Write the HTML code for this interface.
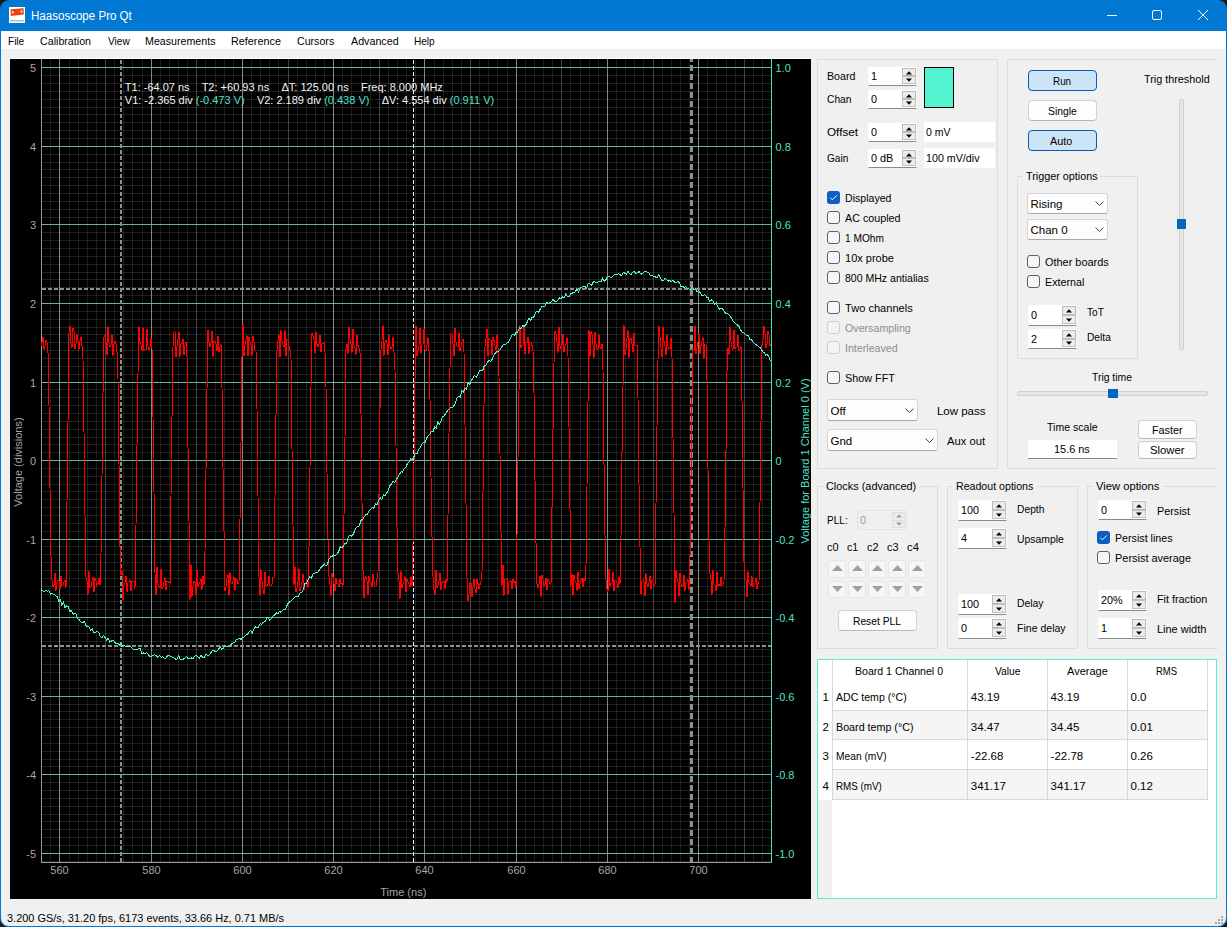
<!DOCTYPE html><html><head><meta charset="utf-8"><style>
*{box-sizing:border-box}
html,body{margin:0;padding:0;width:1227px;height:927px;overflow:hidden;background:#f0f0f0;font-family:"Liberation Sans",sans-serif}
.t{position:absolute;white-space:pre;line-height:20px;height:20px;transform-origin:0 50%}
.gb{position:absolute;border:1px solid #dcdcdc;border-radius:1px}
.sp{position:absolute;background:#fff;border-bottom:1px solid #8a8a8a}
.sb{position:absolute;background:#ececec;border:1px solid #b9b9b9}
.cb{position:absolute;width:13px;height:13px;border:1px solid #606060;border-radius:3px;background:#f6f6f6}
.cbk{position:absolute;width:13px;height:13px;border-radius:3px;background:#0a5fc0}
.combo{position:absolute;background:#fdfdfd;border:1px solid #d4d4d4;border-radius:3px;border-bottom-color:#a8a8a8}
.btn{position:absolute;background:#fdfdfd;border:1px solid #d0d0d0;border-radius:4px;border-bottom-color:#b8b8b8}
.btnb{position:absolute;background:#cce4f7;border:1px solid #0f5ca8;border-radius:4px}
</style></head><body>

<div style="position:absolute;left:0px;top:0px;width:1227px;height:31px;background:#0078d4"></div>
<div style="position:absolute;left:0px;top:31px;width:1227px;height:18px;background:#ffffff"></div>
<svg style="position:absolute;left:0;top:0" width="1227" height="12"><path d="M0 0H9A9 9 0 0 0 0 9Z" fill="#1a1a1a"/><path d="M1227 0H1218A9 9 0 0 1 1227 9Z" fill="#1a1a1a"/></svg>
<div style="position:absolute;left:0px;top:31px;width:1px;height:896px;background:#0078d4"></div>
<div style="position:absolute;left:1226px;top:31px;width:1px;height:896px;background:#0078d4"></div>
<div style="position:absolute;left:0px;top:926px;width:1227px;height:1px;background:#0078d4"></div>
<svg style="position:absolute;left:0;top:915px" width="1227" height="12"><path d="M0 12V3A9 9 0 0 0 9 12Z" fill="#1a1a1a"/><path d="M1227 12V3A9 9 0 0 1 1218 12Z" fill="#1a1a1a"/><path d="M1226.5 3A8.5 8.5 0 0 1 1218 11.5" stroke="#0078d4" fill="none"/><path d="M0.5 3A8.5 8.5 0 0 0 9 11.5" stroke="#0078d4" fill="none"/></svg>
<div style="position:absolute;left:1221px;top:916px;width:2px;height:2px;background:#a8a8a8"></div>
<div style="position:absolute;left:1218px;top:919px;width:2px;height:2px;background:#a8a8a8"></div>
<div style="position:absolute;left:1221px;top:919px;width:2px;height:2px;background:#a8a8a8"></div>
<div style="position:absolute;left:1215px;top:922px;width:2px;height:2px;background:#a8a8a8"></div>
<div style="position:absolute;left:1218px;top:922px;width:2px;height:2px;background:#a8a8a8"></div>
<div style="position:absolute;left:1221px;top:922px;width:2px;height:2px;background:#a8a8a8"></div>
<svg style="position:absolute;left:9px;top:7px" width="16" height="16"><rect width="16" height="16" fill="#fff"/><path d="M1.5 2.2L14.6 1.2L14.8 7.6L1.8 8.9Z" fill="#ec4314"/><ellipse cx="3.7" cy="5.3" rx="0.9" ry="1.2" fill="#e8f4f8"/><ellipse cx="12.5" cy="4.4" rx="0.9" ry="1.2" fill="#e8f4f8"/><rect x="1" y="13.3" width="14" height="1" fill="#9a9a9a"/></svg>
<div class="t" style="left:30.60px;top:6.00px;font-size:12.5px;color:#ffffff;transform:scaleX(0.9241);">Haasoscope Pro Qt</div>
<div style="position:absolute;left:1107px;top:15px;width:10px;height:1px;background:#fff"></div>
<div style="position:absolute;left:1152px;top:10px;width:10px;height:10px;border:1px solid #fff;border-radius:2px"></div>
<svg style="position:absolute;left:1197px;top:9px" width="12" height="12"><path d="M1 1L11 11M11 1L1 11" stroke="#fff" stroke-width="1"/></svg>
<div class="t" style="left:8.20px;top:31.00px;font-size:11.5px;color:#000;transform:scaleX(0.8742);">File</div>
<div class="t" style="left:40.10px;top:31.00px;font-size:11.5px;color:#000;transform:scaleX(0.9277);">Calibration</div>
<div class="t" style="left:107.60px;top:31.00px;font-size:11.5px;color:#000;transform:scaleX(0.8819);">View</div>
<div class="t" style="left:145.10px;top:31.00px;font-size:11.5px;color:#000;transform:scaleX(0.9269);">Measurements</div>
<div class="t" style="left:231.30px;top:31.00px;font-size:11.5px;color:#000;transform:scaleX(0.9405);">Reference</div>
<div class="t" style="left:297.30px;top:31.00px;font-size:11.5px;color:#000;transform:scaleX(0.9241);">Cursors</div>
<div class="t" style="left:350.60px;top:31.00px;font-size:11.5px;color:#000;transform:scaleX(0.9306);">Advanced</div>
<div class="t" style="left:414.30px;top:31.00px;font-size:11.5px;color:#000;transform:scaleX(0.8752);">Help</div>
<svg style="position:absolute;left:10px;top:58px" width="801" height="841" viewBox="10 58 801 841" shape-rendering="crispEdges">
<rect x="10" y="58" width="801" height="1" fill="#ffffff"/>
<rect x="10" y="59" width="801" height="840" fill="#000"/>
<rect x="42" y="861" width="729" height="1" fill="#fff" fill-opacity="0.12"/>
<rect x="42" y="845" width="729" height="1" fill="#fff" fill-opacity="0.12"/>
<rect x="42" y="837" width="729" height="1" fill="#fff" fill-opacity="0.12"/>
<rect x="42" y="829" width="729" height="1" fill="#fff" fill-opacity="0.12"/>
<rect x="42" y="821" width="729" height="1" fill="#fff" fill-opacity="0.12"/>
<rect x="42" y="814" width="729" height="1" fill="#fff" fill-opacity="0.12"/>
<rect x="42" y="806" width="729" height="1" fill="#fff" fill-opacity="0.12"/>
<rect x="42" y="798" width="729" height="1" fill="#fff" fill-opacity="0.12"/>
<rect x="42" y="790" width="729" height="1" fill="#fff" fill-opacity="0.12"/>
<rect x="42" y="782" width="729" height="1" fill="#fff" fill-opacity="0.12"/>
<rect x="42" y="766" width="729" height="1" fill="#fff" fill-opacity="0.12"/>
<rect x="42" y="759" width="729" height="1" fill="#fff" fill-opacity="0.12"/>
<rect x="42" y="751" width="729" height="1" fill="#fff" fill-opacity="0.12"/>
<rect x="42" y="743" width="729" height="1" fill="#fff" fill-opacity="0.12"/>
<rect x="42" y="735" width="729" height="1" fill="#fff" fill-opacity="0.12"/>
<rect x="42" y="727" width="729" height="1" fill="#fff" fill-opacity="0.12"/>
<rect x="42" y="719" width="729" height="1" fill="#fff" fill-opacity="0.12"/>
<rect x="42" y="711" width="729" height="1" fill="#fff" fill-opacity="0.12"/>
<rect x="42" y="704" width="729" height="1" fill="#fff" fill-opacity="0.12"/>
<rect x="42" y="688" width="729" height="1" fill="#fff" fill-opacity="0.12"/>
<rect x="42" y="680" width="729" height="1" fill="#fff" fill-opacity="0.12"/>
<rect x="42" y="672" width="729" height="1" fill="#fff" fill-opacity="0.12"/>
<rect x="42" y="664" width="729" height="1" fill="#fff" fill-opacity="0.12"/>
<rect x="42" y="656" width="729" height="1" fill="#fff" fill-opacity="0.12"/>
<rect x="42" y="649" width="729" height="1" fill="#fff" fill-opacity="0.12"/>
<rect x="42" y="641" width="729" height="1" fill="#fff" fill-opacity="0.12"/>
<rect x="42" y="633" width="729" height="1" fill="#fff" fill-opacity="0.12"/>
<rect x="42" y="625" width="729" height="1" fill="#fff" fill-opacity="0.12"/>
<rect x="42" y="609" width="729" height="1" fill="#fff" fill-opacity="0.12"/>
<rect x="42" y="601" width="729" height="1" fill="#fff" fill-opacity="0.12"/>
<rect x="42" y="594" width="729" height="1" fill="#fff" fill-opacity="0.12"/>
<rect x="42" y="586" width="729" height="1" fill="#fff" fill-opacity="0.12"/>
<rect x="42" y="578" width="729" height="1" fill="#fff" fill-opacity="0.12"/>
<rect x="42" y="570" width="729" height="1" fill="#fff" fill-opacity="0.12"/>
<rect x="42" y="562" width="729" height="1" fill="#fff" fill-opacity="0.12"/>
<rect x="42" y="554" width="729" height="1" fill="#fff" fill-opacity="0.12"/>
<rect x="42" y="546" width="729" height="1" fill="#fff" fill-opacity="0.12"/>
<rect x="42" y="531" width="729" height="1" fill="#fff" fill-opacity="0.12"/>
<rect x="42" y="523" width="729" height="1" fill="#fff" fill-opacity="0.12"/>
<rect x="42" y="515" width="729" height="1" fill="#fff" fill-opacity="0.12"/>
<rect x="42" y="507" width="729" height="1" fill="#fff" fill-opacity="0.12"/>
<rect x="42" y="499" width="729" height="1" fill="#fff" fill-opacity="0.12"/>
<rect x="42" y="491" width="729" height="1" fill="#fff" fill-opacity="0.12"/>
<rect x="42" y="484" width="729" height="1" fill="#fff" fill-opacity="0.12"/>
<rect x="42" y="476" width="729" height="1" fill="#fff" fill-opacity="0.12"/>
<rect x="42" y="468" width="729" height="1" fill="#fff" fill-opacity="0.12"/>
<rect x="42" y="452" width="729" height="1" fill="#fff" fill-opacity="0.12"/>
<rect x="42" y="444" width="729" height="1" fill="#fff" fill-opacity="0.12"/>
<rect x="42" y="437" width="729" height="1" fill="#fff" fill-opacity="0.12"/>
<rect x="42" y="429" width="729" height="1" fill="#fff" fill-opacity="0.12"/>
<rect x="42" y="421" width="729" height="1" fill="#fff" fill-opacity="0.12"/>
<rect x="42" y="413" width="729" height="1" fill="#fff" fill-opacity="0.12"/>
<rect x="42" y="405" width="729" height="1" fill="#fff" fill-opacity="0.12"/>
<rect x="42" y="397" width="729" height="1" fill="#fff" fill-opacity="0.12"/>
<rect x="42" y="389" width="729" height="1" fill="#fff" fill-opacity="0.12"/>
<rect x="42" y="374" width="729" height="1" fill="#fff" fill-opacity="0.12"/>
<rect x="42" y="366" width="729" height="1" fill="#fff" fill-opacity="0.12"/>
<rect x="42" y="358" width="729" height="1" fill="#fff" fill-opacity="0.12"/>
<rect x="42" y="350" width="729" height="1" fill="#fff" fill-opacity="0.12"/>
<rect x="42" y="342" width="729" height="1" fill="#fff" fill-opacity="0.12"/>
<rect x="42" y="334" width="729" height="1" fill="#fff" fill-opacity="0.12"/>
<rect x="42" y="327" width="729" height="1" fill="#fff" fill-opacity="0.12"/>
<rect x="42" y="319" width="729" height="1" fill="#fff" fill-opacity="0.12"/>
<rect x="42" y="311" width="729" height="1" fill="#fff" fill-opacity="0.12"/>
<rect x="42" y="295" width="729" height="1" fill="#fff" fill-opacity="0.12"/>
<rect x="42" y="287" width="729" height="1" fill="#fff" fill-opacity="0.12"/>
<rect x="42" y="279" width="729" height="1" fill="#fff" fill-opacity="0.12"/>
<rect x="42" y="272" width="729" height="1" fill="#fff" fill-opacity="0.12"/>
<rect x="42" y="264" width="729" height="1" fill="#fff" fill-opacity="0.12"/>
<rect x="42" y="256" width="729" height="1" fill="#fff" fill-opacity="0.12"/>
<rect x="42" y="248" width="729" height="1" fill="#fff" fill-opacity="0.12"/>
<rect x="42" y="240" width="729" height="1" fill="#fff" fill-opacity="0.12"/>
<rect x="42" y="232" width="729" height="1" fill="#fff" fill-opacity="0.12"/>
<rect x="42" y="217" width="729" height="1" fill="#fff" fill-opacity="0.12"/>
<rect x="42" y="209" width="729" height="1" fill="#fff" fill-opacity="0.12"/>
<rect x="42" y="201" width="729" height="1" fill="#fff" fill-opacity="0.12"/>
<rect x="42" y="193" width="729" height="1" fill="#fff" fill-opacity="0.12"/>
<rect x="42" y="185" width="729" height="1" fill="#fff" fill-opacity="0.12"/>
<rect x="42" y="177" width="729" height="1" fill="#fff" fill-opacity="0.12"/>
<rect x="42" y="169" width="729" height="1" fill="#fff" fill-opacity="0.12"/>
<rect x="42" y="162" width="729" height="1" fill="#fff" fill-opacity="0.12"/>
<rect x="42" y="154" width="729" height="1" fill="#fff" fill-opacity="0.12"/>
<rect x="42" y="138" width="729" height="1" fill="#fff" fill-opacity="0.12"/>
<rect x="42" y="130" width="729" height="1" fill="#fff" fill-opacity="0.12"/>
<rect x="42" y="122" width="729" height="1" fill="#fff" fill-opacity="0.12"/>
<rect x="42" y="114" width="729" height="1" fill="#fff" fill-opacity="0.12"/>
<rect x="42" y="107" width="729" height="1" fill="#fff" fill-opacity="0.12"/>
<rect x="42" y="99" width="729" height="1" fill="#fff" fill-opacity="0.12"/>
<rect x="42" y="91" width="729" height="1" fill="#fff" fill-opacity="0.12"/>
<rect x="42" y="83" width="729" height="1" fill="#fff" fill-opacity="0.12"/>
<rect x="42" y="75" width="729" height="1" fill="#fff" fill-opacity="0.12"/>
<rect x="50" y="59" width="1" height="803" fill="#fff" fill-opacity="0.105"/>
<rect x="59" y="59" width="1" height="803" fill="#fff" fill-opacity="0.52"/>
<rect x="69" y="59" width="1" height="803" fill="#fff" fill-opacity="0.105"/>
<rect x="78" y="59" width="1" height="803" fill="#fff" fill-opacity="0.105"/>
<rect x="87" y="59" width="1" height="803" fill="#fff" fill-opacity="0.105"/>
<rect x="96" y="59" width="1" height="803" fill="#fff" fill-opacity="0.105"/>
<rect x="105" y="59" width="1" height="803" fill="#fff" fill-opacity="0.25"/>
<rect x="114" y="59" width="1" height="803" fill="#fff" fill-opacity="0.105"/>
<rect x="123" y="59" width="1" height="803" fill="#fff" fill-opacity="0.105"/>
<rect x="132" y="59" width="1" height="803" fill="#fff" fill-opacity="0.105"/>
<rect x="142" y="59" width="1" height="803" fill="#fff" fill-opacity="0.105"/>
<rect x="151" y="59" width="1" height="803" fill="#fff" fill-opacity="0.52"/>
<rect x="160" y="59" width="1" height="803" fill="#fff" fill-opacity="0.105"/>
<rect x="169" y="59" width="1" height="803" fill="#fff" fill-opacity="0.105"/>
<rect x="178" y="59" width="1" height="803" fill="#fff" fill-opacity="0.105"/>
<rect x="187" y="59" width="1" height="803" fill="#fff" fill-opacity="0.105"/>
<rect x="196" y="59" width="1" height="803" fill="#fff" fill-opacity="0.25"/>
<rect x="205" y="59" width="1" height="803" fill="#fff" fill-opacity="0.105"/>
<rect x="215" y="59" width="1" height="803" fill="#fff" fill-opacity="0.105"/>
<rect x="224" y="59" width="1" height="803" fill="#fff" fill-opacity="0.105"/>
<rect x="233" y="59" width="1" height="803" fill="#fff" fill-opacity="0.105"/>
<rect x="242" y="59" width="1" height="803" fill="#fff" fill-opacity="0.52"/>
<rect x="251" y="59" width="1" height="803" fill="#fff" fill-opacity="0.105"/>
<rect x="260" y="59" width="1" height="803" fill="#fff" fill-opacity="0.105"/>
<rect x="269" y="59" width="1" height="803" fill="#fff" fill-opacity="0.105"/>
<rect x="278" y="59" width="1" height="803" fill="#fff" fill-opacity="0.105"/>
<rect x="288" y="59" width="1" height="803" fill="#fff" fill-opacity="0.25"/>
<rect x="297" y="59" width="1" height="803" fill="#fff" fill-opacity="0.105"/>
<rect x="306" y="59" width="1" height="803" fill="#fff" fill-opacity="0.105"/>
<rect x="315" y="59" width="1" height="803" fill="#fff" fill-opacity="0.105"/>
<rect x="324" y="59" width="1" height="803" fill="#fff" fill-opacity="0.105"/>
<rect x="333" y="59" width="1" height="803" fill="#fff" fill-opacity="0.52"/>
<rect x="342" y="59" width="1" height="803" fill="#fff" fill-opacity="0.105"/>
<rect x="351" y="59" width="1" height="803" fill="#fff" fill-opacity="0.105"/>
<rect x="361" y="59" width="1" height="803" fill="#fff" fill-opacity="0.105"/>
<rect x="370" y="59" width="1" height="803" fill="#fff" fill-opacity="0.105"/>
<rect x="379" y="59" width="1" height="803" fill="#fff" fill-opacity="0.25"/>
<rect x="388" y="59" width="1" height="803" fill="#fff" fill-opacity="0.105"/>
<rect x="397" y="59" width="1" height="803" fill="#fff" fill-opacity="0.105"/>
<rect x="406" y="59" width="1" height="803" fill="#fff" fill-opacity="0.105"/>
<rect x="415" y="59" width="1" height="803" fill="#fff" fill-opacity="0.105"/>
<rect x="424" y="59" width="1" height="803" fill="#fff" fill-opacity="0.52"/>
<rect x="434" y="59" width="1" height="803" fill="#fff" fill-opacity="0.105"/>
<rect x="443" y="59" width="1" height="803" fill="#fff" fill-opacity="0.105"/>
<rect x="452" y="59" width="1" height="803" fill="#fff" fill-opacity="0.105"/>
<rect x="461" y="59" width="1" height="803" fill="#fff" fill-opacity="0.105"/>
<rect x="470" y="59" width="1" height="803" fill="#fff" fill-opacity="0.25"/>
<rect x="479" y="59" width="1" height="803" fill="#fff" fill-opacity="0.105"/>
<rect x="488" y="59" width="1" height="803" fill="#fff" fill-opacity="0.105"/>
<rect x="497" y="59" width="1" height="803" fill="#fff" fill-opacity="0.105"/>
<rect x="507" y="59" width="1" height="803" fill="#fff" fill-opacity="0.105"/>
<rect x="516" y="59" width="1" height="803" fill="#fff" fill-opacity="0.52"/>
<rect x="525" y="59" width="1" height="803" fill="#fff" fill-opacity="0.105"/>
<rect x="534" y="59" width="1" height="803" fill="#fff" fill-opacity="0.105"/>
<rect x="543" y="59" width="1" height="803" fill="#fff" fill-opacity="0.105"/>
<rect x="552" y="59" width="1" height="803" fill="#fff" fill-opacity="0.105"/>
<rect x="561" y="59" width="1" height="803" fill="#fff" fill-opacity="0.25"/>
<rect x="570" y="59" width="1" height="803" fill="#fff" fill-opacity="0.105"/>
<rect x="580" y="59" width="1" height="803" fill="#fff" fill-opacity="0.105"/>
<rect x="589" y="59" width="1" height="803" fill="#fff" fill-opacity="0.105"/>
<rect x="598" y="59" width="1" height="803" fill="#fff" fill-opacity="0.105"/>
<rect x="607" y="59" width="1" height="803" fill="#fff" fill-opacity="0.52"/>
<rect x="616" y="59" width="1" height="803" fill="#fff" fill-opacity="0.105"/>
<rect x="625" y="59" width="1" height="803" fill="#fff" fill-opacity="0.105"/>
<rect x="634" y="59" width="1" height="803" fill="#fff" fill-opacity="0.105"/>
<rect x="643" y="59" width="1" height="803" fill="#fff" fill-opacity="0.105"/>
<rect x="653" y="59" width="1" height="803" fill="#fff" fill-opacity="0.25"/>
<rect x="662" y="59" width="1" height="803" fill="#fff" fill-opacity="0.105"/>
<rect x="671" y="59" width="1" height="803" fill="#fff" fill-opacity="0.105"/>
<rect x="680" y="59" width="1" height="803" fill="#fff" fill-opacity="0.105"/>
<rect x="689" y="59" width="1" height="803" fill="#fff" fill-opacity="0.105"/>
<rect x="698" y="59" width="1" height="803" fill="#fff" fill-opacity="0.52"/>
<rect x="707" y="59" width="1" height="803" fill="#fff" fill-opacity="0.105"/>
<rect x="716" y="59" width="1" height="803" fill="#fff" fill-opacity="0.105"/>
<rect x="726" y="59" width="1" height="803" fill="#fff" fill-opacity="0.105"/>
<rect x="735" y="59" width="1" height="803" fill="#fff" fill-opacity="0.105"/>
<rect x="744" y="59" width="1" height="803" fill="#fff" fill-opacity="0.25"/>
<rect x="753" y="59" width="1" height="803" fill="#fff" fill-opacity="0.105"/>
<rect x="762" y="59" width="1" height="803" fill="#fff" fill-opacity="0.105"/>
<rect x="42" y="853" width="729" height="1" fill="#6ab4a2"/>
<rect x="42" y="774" width="729" height="1" fill="#6ab4a2"/>
<rect x="42" y="696" width="729" height="1" fill="#6ab4a2"/>
<rect x="42" y="617" width="729" height="1" fill="#6ab4a2"/>
<rect x="42" y="539" width="729" height="1" fill="#6ab4a2"/>
<rect x="42" y="460" width="729" height="1" fill="#6ab4a2"/>
<rect x="42" y="382" width="729" height="1" fill="#6ab4a2"/>
<rect x="42" y="303" width="729" height="1" fill="#6ab4a2"/>
<rect x="42" y="224" width="729" height="1" fill="#6ab4a2"/>
<rect x="42" y="146" width="729" height="1" fill="#6ab4a2"/>
<rect x="42" y="67" width="729" height="1" fill="#6ab4a2"/>
<rect x="41" y="59" width="1" height="804" fill="#9a9a9a"/>
<rect x="41" y="862" width="731" height="1" fill="#9a9a9a"/>
<rect x="771" y="59" width="1" height="804" fill="#50e0c4"/>
<line x1="121" y1="60" x2="121" y2="862" stroke="#8e8e8e" stroke-width="2" stroke-dasharray="4 2"/>
<line x1="413.5" y1="60" x2="413.5" y2="862" stroke="#f4f4f4" stroke-width="1" stroke-dasharray="4 2"/>
<line x1="691.5" y1="59" x2="691.5" y2="862" stroke="#8e8e8e" stroke-width="3" stroke-dasharray="6 3" stroke-dashoffset="3"/>
<line x1="42" y1="289" x2="771" y2="289" stroke="#8e8e8e" stroke-width="2" stroke-dasharray="4 2"/>
<line x1="42" y1="646" x2="771" y2="646" stroke="#8e8e8e" stroke-width="2" stroke-dasharray="4 2"/>
<polyline fill="none" stroke="#ff0000" stroke-width="1" points="41.0,346.5 42.0,341.7 43.0,337.0 44.0,349.4 45.0,346.3 46.0,340.6 47.0,341.7 48.0,352.7 49.0,404.7 50.0,487.7 51.0,556.7 52.0,580.1 53.0,587.3 54.0,585.1 55.0,573.2 56.0,590.6 57.0,582.1 58.0,579.7 59.0,581.1 60.0,589.3 61.0,575.6 62.0,586.2 63.0,585.2 64.0,581.6 65.0,579.8 66.0,588.3 67.0,501.7 68.0,422.0 69.0,333.5 70.0,326.1 71.0,342.9 72.0,347.6 73.0,327.8 74.0,331.3 75.0,349.4 76.0,344.1 77.0,334.5 78.0,340.8 79.0,349.6 80.0,341.4 81.0,336.8 82.0,345.5 83.0,359.4 84.0,431.8 85.0,515.2 86.0,577.2 87.0,581.0 88.0,594.7 89.0,571.4 90.0,587.4 91.0,586.3 92.0,580.8 93.0,577.1 94.0,592.3 95.0,577.9 96.0,581.3 97.0,585.4 98.0,583.6 99.0,577.8 100.0,585.4 101.0,553.9 102.0,475.9 103.0,392.9 104.0,337.0 105.0,335.0 106.0,342.2 107.0,355.4 108.0,326.3 109.0,342.6 110.0,346.9 111.0,344.7 112.0,334.5 113.0,355.7 114.0,344.5 115.0,340.9 116.0,344.1 117.0,351.6 118.0,379.3 119.0,463.8 120.0,546.8 121.0,574.8 122.0,570.4 123.0,599.9 124.0,584.8 125.0,583.4 126.0,575.6 127.0,591.9 128.0,583.0 129.0,582.3 130.0,579.9 131.0,591.0 132.0,580.9 133.0,582.2 134.0,581.1 135.0,588.7 136.0,525.4 137.0,445.5 138.0,373.8 139.0,326.4 140.0,342.6 141.0,344.8 142.0,350.2 143.0,327.8 144.0,350.0 145.0,349.2 146.0,350.1 147.0,328.9 148.0,345.6 149.0,349.8 150.0,347.5 151.0,338.3 152.0,347.7 153.0,416.8 154.0,492.2 155.0,573.2 156.0,595.4 157.0,566.7 158.0,583.1 159.0,586.5 160.0,588.2 161.0,569.2 162.0,588.5 163.0,586.8 164.0,581.9 165.0,577.6 166.0,590.1 167.0,581.3 168.0,581.4 169.0,582.3 170.0,585.0 171.0,496.6 172.0,417.2 173.0,346.7 174.0,331.7 175.0,331.9 176.0,357.3 177.0,346.0 178.0,338.9 179.0,331.7 180.0,356.6 181.0,343.8 182.0,344.1 183.0,339.2 184.0,355.0 185.0,344.9 186.0,342.2 187.0,356.5 188.0,447.1 189.0,520.5 190.0,600.0 191.0,564.1 192.0,596.6 193.0,586.2 194.0,581.4 195.0,582.5 196.0,595.2 197.0,569.7 198.0,586.6 199.0,583.9 200.0,582.4 201.0,578.9 202.0,589.6 203.0,575.7 204.0,584.6 205.0,551.3 206.0,470.6 207.0,389.1 208.0,329.9 209.0,342.5 210.0,346.7 211.0,342.9 212.0,331.1 213.0,356.5 214.0,341.6 215.0,341.5 216.0,343.7 217.0,350.8 218.0,335.9 219.0,351.9 220.0,347.4 221.0,344.2 222.0,387.6 223.0,467.9 224.0,531.0 225.0,591.0 226.0,586.7 227.0,578.3 228.0,574.3 229.0,595.7 230.0,572.5 231.0,582.9 232.0,584.0 233.0,581.4 234.0,577.2 235.0,590.2 236.0,577.8 237.0,580.5 238.0,584.1 239.0,582.5 240.0,520.2 241.0,443.2 242.0,356.9 243.0,324.8 244.0,356.3 245.0,345.3 246.0,340.1 247.0,335.5 248.0,356.3 249.0,337.4 250.0,342.3 251.0,344.5 252.0,355.9 253.0,336.0 254.0,342.4 255.0,350.3 256.0,350.9 257.0,409.2 258.0,496.1 259.0,577.1 260.0,595.5 261.0,569.4 262.0,580.7 263.0,588.9 264.0,594.2 265.0,572.1 266.0,585.9 267.0,586.1 268.0,584.4 269.0,576.1 270.0,585.2 271.0,585.8 272.0,584.0 273.0,577.2 274.0,577.7 275.0,497.4 276.0,415.1 277.0,350.8 278.0,339.7 279.0,334.3 280.0,357.4 281.0,330.5 282.0,341.1 283.0,344.7 284.0,347.2 285.0,330.3 286.0,356.0 287.0,339.7 288.0,338.8 289.0,346.2 290.0,349.5 291.0,357.9 292.0,448.7 293.0,524.7 294.0,584.6 295.0,567.1 296.0,591.9 297.0,587.7 298.0,580.8 299.0,568.4 300.0,591.4 301.0,587.1 302.0,581.7 303.0,574.0 304.0,589.7 305.0,584.5 306.0,583.5 307.0,579.3 308.0,587.6 309.0,547.6 310.0,468.1 311.0,386.4 312.0,333.5 313.0,336.3 314.0,340.0 315.0,353.1 316.0,332.3 317.0,344.4 318.0,346.7 319.0,343.8 320.0,334.7 321.0,351.8 322.0,343.9 323.0,343.0 324.0,343.0 325.0,352.2 326.0,387.0 327.0,472.4 328.0,539.1 329.0,576.6 330.0,585.0 331.0,595.7 332.0,573.2 333.0,577.1 334.0,583.7 335.0,591.2 336.0,578.2 337.0,583.7 338.0,583.7 339.0,586.8 340.0,579.4 341.0,583.6 342.0,583.5 343.0,587.2 344.0,515.3 345.0,437.8 346.0,349.0 347.0,343.6 348.0,353.9 349.0,326.9 350.0,339.0 351.0,344.0 352.0,353.1 353.0,328.6 354.0,345.3 355.0,347.8 356.0,354.9 357.0,334.7 358.0,345.6 359.0,347.6 360.0,352.4 361.0,413.5 362.0,500.8 363.0,570.0 364.0,598.2 365.0,578.6 366.0,576.5 367.0,580.5 368.0,595.3 369.0,576.0 370.0,581.9 371.0,582.4 372.0,586.9 373.0,573.8 374.0,582.0 375.0,586.2 376.0,586.0 377.0,578.1 378.0,572.6 379.0,493.0 380.0,409.6 381.0,350.4 382.0,340.7 383.0,325.2 384.0,355.7 385.0,342.3 386.0,339.9 387.0,344.1 388.0,355.3 389.0,335.2 390.0,345.7 391.0,349.1 392.0,346.9 393.0,337.5 394.0,352.8 395.0,369.8 396.0,445.8 397.0,527.3 398.0,573.0 399.0,580.8 400.0,598.6 401.0,571.3 402.0,587.7 403.0,584.2 404.0,580.9 405.0,576.6 406.0,591.9 407.0,579.3 408.0,582.1 409.0,584.3 410.0,587.2 411.0,577.3 412.0,586.0 413.0,544.4 414.0,463.7 415.0,380.9 416.0,325.6 417.0,355.8 418.0,350.6 419.0,345.6 420.0,327.6 421.0,353.0 422.0,345.1 423.0,344.8 424.0,329.2 425.0,349.8 426.0,350.6 427.0,345.4 428.0,337.4 429.0,350.7 430.0,399.0 431.0,477.2 432.0,536.7 433.0,576.5 434.0,590.4 435.0,594.6 436.0,569.7 437.0,587.3 438.0,586.5 439.0,581.0 440.0,573.2 441.0,590.3 442.0,582.5 443.0,581.0 444.0,581.1 445.0,589.3 446.0,579.0 447.0,582.4 448.0,516.1 449.0,433.2 450.0,368.0 451.0,333.7 452.0,335.0 453.0,343.7 454.0,356.2 455.0,328.1 456.0,341.8 457.0,345.8 458.0,347.1 459.0,333.1 460.0,350.9 461.0,346.8 462.0,342.0 463.0,338.9 464.0,352.3 465.0,424.5 466.0,503.1 467.0,577.7 468.0,601.1 469.0,594.8 470.0,582.0 471.0,583.4 472.0,597.1 473.0,587.2 474.0,578.6 475.0,588.9 476.0,592.9 477.0,579.0 478.0,583.5 479.0,589.0 480.0,584.6 481.0,581.1 482.0,571.6 483.0,492.2 484.0,405.5 485.0,347.5 486.0,338.3 487.0,328.9 488.0,356.3 489.0,338.5 490.0,340.1 491.0,340.2 492.0,355.4 493.0,336.6 494.0,340.5 495.0,346.1 496.0,350.2 497.0,335.3 498.0,347.6 499.0,375.9 500.0,454.1 501.0,530.9 502.0,585.8 503.0,565.0 504.0,595.5 505.0,579.7 506.0,578.9 507.0,578.5 508.0,594.2 509.0,582.1 510.0,580.7 511.0,581.5 512.0,589.4 513.0,579.2 514.0,582.8 515.0,581.2 516.0,587.7 517.0,535.7 518.0,459.4 519.0,391.4 520.0,325.4 521.0,347.9 522.0,344.8 523.0,345.6 524.0,326.9 525.0,354.3 526.0,342.9 527.0,342.7 528.0,336.7 529.0,353.5 530.0,342.5 531.0,342.0 532.0,345.4 533.0,351.1 534.0,393.3 535.0,479.6 536.0,542.8 537.0,583.9 538.0,587.5 539.0,584.0 540.0,575.8 541.0,596.7 542.0,574.6 543.0,579.9 544.0,585.5 545.0,584.3 546.0,577.7 547.0,589.7 548.0,578.6 549.0,581.3 550.0,583.6 551.0,584.7 552.0,508.5 553.0,430.5 554.0,362.7 555.0,331.2 556.0,334.3 557.0,342.5 558.0,352.6 559.0,327.0 560.0,346.0 561.0,348.7 562.0,345.5 563.0,333.9 564.0,352.1 565.0,345.9 566.0,344.3 567.0,337.4 568.0,356.4 569.0,426.5 570.0,508.5 571.0,585.6 572.0,574.1 573.0,595.8 574.0,575.0 575.0,581.3 576.0,582.6 577.0,590.7 578.0,572.0 579.0,588.9 580.0,584.3 581.0,580.5 582.0,578.2 583.0,586.7 584.0,577.8 585.0,580.8 586.0,566.1 587.0,486.1 588.0,402.7 589.0,330.4 590.0,356.7 591.0,331.6 592.0,333.9 593.0,344.6 594.0,357.8 595.0,331.7 596.0,344.1 597.0,348.7 598.0,349.3 599.0,335.0 600.0,346.9 601.0,349.0 602.0,344.1 603.0,369.7 604.0,464.7 605.0,535.2 606.0,579.9 607.0,588.8 608.0,592.0 609.0,569.1 610.0,586.3 611.0,583.2 612.0,583.0 613.0,572.2 614.0,591.4 615.0,579.9 616.0,581.3 617.0,583.0 618.0,588.3 619.0,576.8 620.0,584.0 621.0,536.8 622.0,453.4 623.0,386.5 624.0,325.1 625.0,354.8 626.0,350.2 627.0,338.5 628.0,330.5 629.0,357.5 630.0,339.5 631.0,337.7 632.0,343.6 633.0,352.4 634.0,332.8 635.0,345.0 636.0,346.3 637.0,344.8 638.0,397.8 639.0,484.3 640.0,547.3 641.0,594.0 642.0,581.2 643.0,580.3 644.0,581.7 645.0,596.0 646.0,573.5 647.0,583.7 648.0,587.0 649.0,581.7 650.0,576.3 651.0,589.7 652.0,580.6 653.0,581.2 654.0,583.8 655.0,586.4 656.0,503.0 657.0,426.6 658.0,359.9 659.0,325.6 660.0,337.2 661.0,348.4 662.0,357.1 663.0,327.1 664.0,341.5 665.0,345.9 666.0,355.1 667.0,334.6 668.0,346.1 669.0,349.1 670.0,348.7 671.0,338.2 672.0,356.8 673.0,437.5 674.0,512.7 675.0,602.9 676.0,570.4 677.0,579.3 678.0,581.4 679.0,596.3 680.0,573.3 681.0,582.9 682.0,586.8 683.0,585.7 684.0,574.8 685.0,590.5 686.0,583.2 687.0,582.0 688.0,579.5 689.0,590.0 690.0,556.9 691.0,478.3 692.0,398.6 693.0,348.9 694.0,350.3 695.0,325.8 696.0,353.7 697.0,348.4 698.0,341.7 699.0,334.1 700.0,353.5 701.0,345.6 702.0,340.7 703.0,337.5 704.0,358.5 705.0,344.3 706.0,344.7 707.0,382.8 708.0,467.8 709.0,538.6 710.0,574.3 711.0,580.0 712.0,594.5 713.0,570.4 714.0,584.1 715.0,584.7 716.0,591.3 717.0,572.0 718.0,585.9 719.0,584.6 720.0,585.7 721.0,576.9 722.0,585.8 723.0,585.1 724.0,581.5 725.0,528.5 726.0,450.5 727.0,371.6 728.0,348.1 729.0,354.9 730.0,326.6 731.0,341.6 732.0,347.7 733.0,349.6 734.0,329.8 735.0,348.7 736.0,347.2 737.0,347.3 738.0,335.0 739.0,350.3 740.0,349.0 741.0,346.2 742.0,400.5 743.0,488.2 744.0,561.6 745.0,579.1 746.0,579.9 747.0,597.3 748.0,571.5 749.0,583.4 750.0,584.2 751.0,586.3 752.0,576.4 753.0,587.0 754.0,585.3 755.0,583.5 756.0,578.2 757.0,588.7 758.0,583.5 759.0,582.0 760.0,502.8 761.0,421.8 762.0,344.9 763.0,340.0 764.0,325.9 765.0,332.7 766.0,347.8 767.0,344.5 768.0,330.7 769.0,334.8 770.0,345.6 771.0,344.0"/>
<polyline fill="none" stroke="#4ff5d2" stroke-width="1" points="41.0,588.2 42.6,590.6 44.2,591.8 45.8,590.5 47.4,591.2 49.0,590.9 50.6,594.3 52.2,593.6 53.8,594.6 55.4,595.3 57.0,596.5 58.6,600.9 60.2,599.8 61.8,604.9 63.4,602.5 65.0,607.4 66.6,605.7 68.2,606.7 69.8,611.3 71.4,610.7 73.0,614.3 74.6,613.4 76.2,614.3 77.8,618.9 79.4,620.0 81.0,622.1 82.6,622.9 84.2,621.5 85.8,625.2 87.4,626.8 89.0,627.0 90.6,630.3 92.2,628.6 93.8,632.9 95.4,633.0 97.0,631.1 98.6,632.2 100.2,636.1 101.8,637.8 103.4,635.5 105.0,637.4 106.6,640.1 108.2,638.4 109.8,642.2 111.4,641.2 113.0,640.0 114.6,642.0 116.2,643.5 117.8,643.5 119.4,645.1 121.0,643.3 122.6,646.7 124.2,645.1 125.8,646.6 127.4,646.8 129.0,646.2 130.6,646.4 132.2,648.5 133.8,649.8 135.4,649.7 137.0,649.4 138.6,648.9 140.2,648.6 141.8,653.3 143.4,652.8 145.0,654.1 146.6,652.6 148.2,654.4 149.8,656.5 151.4,656.3 153.0,655.7 154.6,654.7 156.2,655.4 157.8,657.6 159.4,655.5 161.0,657.1 162.6,656.9 164.2,658.4 165.8,658.2 167.4,656.1 169.0,655.0 170.6,656.3 172.2,657.1 173.8,658.0 175.4,659.0 177.0,659.4 178.6,655.7 180.2,659.1 181.8,659.0 183.4,659.2 185.0,657.9 186.6,656.5 188.2,659.0 189.8,658.7 191.4,658.0 193.0,658.9 194.6,656.3 196.2,655.1 197.8,657.0 199.4,657.9 201.0,655.1 202.6,657.2 204.2,657.7 205.8,654.3 207.4,655.3 209.0,654.9 210.6,653.0 212.2,651.0 213.8,650.3 215.4,651.8 217.0,651.2 218.6,649.1 220.2,646.8 221.8,649.3 223.4,648.5 225.0,645.5 226.6,646.3 228.2,647.0 229.8,646.2 231.4,643.8 233.0,642.8 234.6,642.5 236.2,639.9 237.8,639.1 239.4,638.2 241.0,639.6 242.6,637.1 244.2,637.0 245.8,635.2 247.4,634.6 249.0,631.8 250.6,630.2 252.2,633.1 253.8,629.2 255.4,626.8 257.0,627.9 258.6,627.4 260.2,623.5 261.8,624.3 263.4,622.1 265.0,621.8 266.6,618.5 268.2,617.4 269.8,620.5 271.4,618.9 273.0,616.1 274.6,615.3 276.2,612.8 277.8,613.9 279.4,611.2 281.0,612.3 282.6,610.4 284.2,609.4 285.8,608.9 287.4,604.5 289.0,602.2 290.6,601.5 292.2,600.1 293.8,598.2 295.4,596.4 297.0,596.9 298.6,596.3 300.2,592.2 301.8,592.0 303.4,589.4 305.0,583.2 306.6,583.1 308.2,579.9 309.8,576.6 311.4,578.4 313.0,573.6 314.6,573.4 316.2,572.3 317.8,572.4 319.4,569.8 321.0,567.3 322.6,566.3 324.2,563.6 325.8,565.8 327.4,564.4 329.0,559.4 330.6,556.9 332.2,556.2 333.8,554.9 335.4,555.6 337.0,553.9 338.6,551.8 340.2,546.6 341.8,548.0 343.4,545.8 345.0,543.6 346.6,543.2 348.2,537.1 349.8,535.5 351.4,536.1 353.0,534.7 354.6,531.4 356.2,527.6 357.8,526.8 359.4,525.4 361.0,520.4 362.6,519.3 364.2,517.0 365.8,514.5 367.4,514.3 369.0,511.2 370.6,509.7 372.2,507.6 373.8,508.2 375.4,503.6 377.0,504.8 378.6,500.6 380.2,497.9 381.8,499.8 383.4,494.5 385.0,495.5 386.6,493.0 388.2,490.9 389.8,485.4 391.4,484.6 393.0,480.9 394.6,482.4 396.2,480.0 397.8,477.1 399.4,474.3 401.0,471.9 402.6,472.2 404.2,468.8 405.8,467.5 407.4,463.5 409.0,461.9 410.6,459.1 412.2,459.9 413.8,457.1 415.4,453.2 417.0,454.1 418.6,449.3 420.2,447.7 421.8,444.3 423.4,442.5 425.0,442.8 426.6,438.3 428.2,435.3 429.8,434.6 431.4,431.6 433.0,432.1 434.6,426.5 436.2,428.3 437.8,422.2 439.4,423.8 441.0,420.8 442.6,416.8 444.2,416.0 445.8,413.1 447.4,411.0 449.0,408.7 450.6,407.3 452.2,408.0 453.8,405.9 455.4,403.5 457.0,397.7 458.6,396.4 460.2,396.9 461.8,391.1 463.4,392.0 465.0,388.0 466.6,389.0 468.2,382.8 469.8,384.4 471.4,380.4 473.0,377.7 474.6,375.3 476.2,377.2 477.8,374.2 479.4,371.0 481.0,370.4 482.6,370.7 484.2,366.0 485.8,365.8 487.4,362.2 489.0,360.6 490.6,361.4 492.2,359.4 493.8,355.3 495.4,353.0 497.0,351.3 498.6,351.8 500.2,349.5 501.8,346.8 503.4,344.7 505.0,344.8 506.6,343.5 508.2,342.2 509.8,339.6 511.4,336.2 513.0,334.0 514.6,335.3 516.2,332.2 517.8,332.0 519.4,327.5 521.0,329.3 522.6,325.6 524.2,326.3 525.8,324.8 527.4,321.7 529.0,318.0 530.6,320.4 532.2,317.0 533.8,317.1 535.4,312.9 537.0,311.1 538.6,312.4 540.2,309.0 541.8,306.7 543.4,306.3 545.0,306.1 546.6,302.4 548.2,303.6 549.8,302.4 551.4,301.9 553.0,299.4 554.6,301.3 556.2,301.1 557.8,300.7 559.4,297.7 561.0,298.8 562.6,296.8 564.2,297.7 565.8,294.0 567.4,296.9 569.0,296.5 570.6,293.7 572.2,293.1 573.8,292.4 575.4,291.7 577.0,288.8 578.6,292.2 580.2,288.2 581.8,287.3 583.4,286.3 585.0,286.2 586.6,288.0 588.2,283.9 589.8,283.5 591.4,285.5 593.0,282.6 594.6,281.2 596.2,283.1 597.8,282.3 599.4,281.5 601.0,281.6 602.6,278.4 604.2,281.2 605.8,280.0 607.4,276.5 609.0,276.3 610.6,277.4 612.2,276.9 613.8,275.4 615.4,274.2 617.0,275.0 618.6,273.4 620.2,274.9 621.8,275.7 623.4,272.1 625.0,273.6 626.6,274.1 628.2,271.2 629.8,274.0 631.4,274.3 633.0,271.8 634.6,271.9 636.2,273.7 637.8,272.3 639.4,271.7 641.0,274.2 642.6,273.5 644.2,271.7 645.8,271.5 647.4,272.2 649.0,273.0 650.6,275.9 652.2,275.6 653.8,276.7 655.4,276.9 657.0,277.7 658.6,274.8 660.2,277.6 661.8,280.2 663.4,280.7 665.0,278.3 666.6,279.6 668.2,281.1 669.8,280.4 671.4,281.7 673.0,280.2 674.6,282.3 676.2,283.1 677.8,281.5 679.4,282.6 681.0,286.8 682.6,286.4 684.2,287.6 685.8,286.8 687.4,288.1 689.0,289.0 690.6,289.6 692.2,286.6 693.8,289.9 695.4,289.0 697.0,291.6 698.6,290.7 700.2,292.8 701.8,295.4 703.4,295.2 705.0,294.7 706.6,297.1 708.2,297.9 709.8,301.4 711.4,299.8 713.0,301.2 714.6,303.9 716.2,302.9 717.8,306.3 719.4,309.2 721.0,308.6 722.6,309.0 724.2,311.4 725.8,313.3 727.4,313.3 729.0,315.0 730.6,316.9 732.2,319.5 733.8,321.9 735.4,323.2 737.0,324.7 738.6,325.6 740.2,329.2 741.8,332.0 743.4,332.5 745.0,333.8 746.6,335.7 748.2,335.3 749.8,339.1 751.4,339.7 753.0,341.7 754.6,343.7 756.2,344.8 757.8,345.8 759.4,347.1 761.0,348.7 762.6,351.6 764.2,352.6 765.8,355.1 767.4,354.2 769.0,357.3 770.6,361.2"/>
</svg>
<div class="t" style="left:26.22px;top:843.50px;font-size:11px;color:#a6a6a6;">-5</div>
<div class="t" style="left:26.22px;top:764.50px;font-size:11px;color:#a6a6a6;">-4</div>
<div class="t" style="left:26.22px;top:686.50px;font-size:11px;color:#a6a6a6;">-3</div>
<div class="t" style="left:26.22px;top:607.50px;font-size:11px;color:#a6a6a6;">-2</div>
<div class="t" style="left:26.22px;top:529.50px;font-size:11px;color:#a6a6a6;">-1</div>
<div class="t" style="left:29.88px;top:450.50px;font-size:11px;color:#a6a6a6;">0</div>
<div class="t" style="left:29.88px;top:372.50px;font-size:11px;color:#a6a6a6;">1</div>
<div class="t" style="left:29.88px;top:293.50px;font-size:11px;color:#a6a6a6;">2</div>
<div class="t" style="left:29.88px;top:214.50px;font-size:11px;color:#a6a6a6;">3</div>
<div class="t" style="left:29.88px;top:136.50px;font-size:11px;color:#a6a6a6;">4</div>
<div class="t" style="left:29.88px;top:57.50px;font-size:11px;color:#a6a6a6;">5</div>
<div class="t" style="left:775.50px;top:57.50px;font-size:11px;color:#50e0c4;">1.0</div>
<div class="t" style="left:775.50px;top:136.50px;font-size:11px;color:#50e0c4;">0.8</div>
<div class="t" style="left:775.50px;top:214.50px;font-size:11px;color:#50e0c4;">0.6</div>
<div class="t" style="left:775.50px;top:293.50px;font-size:11px;color:#50e0c4;">0.4</div>
<div class="t" style="left:775.50px;top:372.50px;font-size:11px;color:#50e0c4;">0.2</div>
<div class="t" style="left:775.50px;top:450.50px;font-size:11px;color:#50e0c4;">0</div>
<div class="t" style="left:775.50px;top:529.50px;font-size:11px;color:#50e0c4;">-0.2</div>
<div class="t" style="left:775.50px;top:607.50px;font-size:11px;color:#50e0c4;">-0.4</div>
<div class="t" style="left:775.50px;top:686.50px;font-size:11px;color:#50e0c4;">-0.6</div>
<div class="t" style="left:775.50px;top:764.50px;font-size:11px;color:#50e0c4;">-0.8</div>
<div class="t" style="left:775.50px;top:843.50px;font-size:11px;color:#50e0c4;">-1.0</div>
<div class="t" style="left:50.32px;top:860.00px;font-size:11px;color:#a6a6a6;">560</div>
<div class="t" style="left:142.32px;top:860.00px;font-size:11px;color:#a6a6a6;">580</div>
<div class="t" style="left:233.32px;top:860.00px;font-size:11px;color:#a6a6a6;">600</div>
<div class="t" style="left:324.32px;top:860.00px;font-size:11px;color:#a6a6a6;">620</div>
<div class="t" style="left:415.32px;top:860.00px;font-size:11px;color:#a6a6a6;">640</div>
<div class="t" style="left:507.32px;top:860.00px;font-size:11px;color:#a6a6a6;">660</div>
<div class="t" style="left:598.32px;top:860.00px;font-size:11px;color:#a6a6a6;">680</div>
<div class="t" style="left:689.32px;top:860.00px;font-size:11px;color:#a6a6a6;">700</div>
<div class="t" style="left:380.28px;top:881.50px;font-size:11px;color:#a6a6a6;">Time (ns)</div>
<div class="t" style="left:-32px;top:451.5px;width:100px;text-align:center;font-size:11px;color:#a6a6a6;transform:rotate(-90deg);transform-origin:50% 50%">Voltage (divisions)</div>
<div class="t" style="left:705px;top:450.7px;width:200px;text-align:center;font-size:11px;color:#50e0c4;transform:rotate(-90deg);transform-origin:50% 50%">Voltage for Board 1 Channel 0 (V)</div>
<div class="t" style="left:124.80px;top:77.30px;font-size:11px;color:#f4f4f4;">T1: -64.07 ns    T2: +60.93 ns    ΔT: 125.00 ns    Freq: 8.000 MHz</div>
<div class="t" style="left:124.8px;top:89.5px;font-size:11px;color:#f4f4f4">V1: -2.365 div <span style="color:#50e0c4">(-0.473 V)</span>&nbsp;&nbsp;&nbsp;&nbsp;V2: 2.189 div <span style="color:#50e0c4">(0.438 V)</span>&nbsp;&nbsp;&nbsp;&nbsp;ΔV: 4.554 div <span style="color:#50e0c4">(0.911 V)</span></div>
<div class="gb" style="left:817px;top:59px;width:181px;height:410px;"></div>
<div class="t" style="left:827.10px;top:66.00px;font-size:11.5px;color:#000;transform:scaleX(0.9287);">Board</div>
<div style="position:absolute;left:868px;top:67px;width:49px;height:19px;background:#fff;border:1px solid #f9f9f9;border-top:none;border-bottom:1px solid #8a8a8a"></div>
<div style="position:absolute;left:902px;top:68px;width:14px;height:8px;border:1px solid #bababa;background:#ececec"></div>
<div style="position:absolute;left:902px;top:76px;width:14px;height:8px;border:1px solid #c2c2c2;background:#ececec"></div>
<svg style="position:absolute;left:905px;top:71px" width="8" height="4"><path d="M1 3.6L4 0.2L7 3.6Z" fill="#000"/></svg>
<svg style="position:absolute;left:905px;top:78px" width="8" height="4"><path d="M1 0.4L4 3.8L7 0.4Z" fill="#000"/></svg>
<div class="t" style="left:871.00px;top:66.00px;font-size:11.5px;color:#000;transform:scaleX(0.94);">1</div>
<div class="t" style="left:827.10px;top:89.00px;font-size:11.5px;color:#000;transform:scaleX(0.8912);">Chan</div>
<div style="position:absolute;left:868px;top:90px;width:49px;height:19px;background:#fff;border:1px solid #f9f9f9;border-top:none;border-bottom:1px solid #8a8a8a"></div>
<div style="position:absolute;left:902px;top:91px;width:14px;height:8px;border:1px solid #bababa;background:#ececec"></div>
<div style="position:absolute;left:902px;top:99px;width:14px;height:8px;border:1px solid #c2c2c2;background:#ececec"></div>
<svg style="position:absolute;left:905px;top:94px" width="8" height="4"><path d="M1 3.6L4 0.2L7 3.6Z" fill="#000"/></svg>
<svg style="position:absolute;left:905px;top:101px" width="8" height="4"><path d="M1 0.4L4 3.8L7 0.4Z" fill="#000"/></svg>
<div class="t" style="left:871.00px;top:89.00px;font-size:11.5px;color:#000;transform:scaleX(0.94);">0</div>
<div style="position:absolute;left:924px;top:67px;width:30px;height:41px;background:#52f4d0;border:1px solid #000"></div>
<div class="t" style="left:827.00px;top:122.00px;font-size:11.5px;color:#000;transform:scaleX(1.0175);">Offset</div>
<div style="position:absolute;left:868px;top:123px;width:49px;height:19px;background:#fff;border:1px solid #f9f9f9;border-top:none;border-bottom:1px solid #8a8a8a"></div>
<div style="position:absolute;left:902px;top:124px;width:14px;height:8px;border:1px solid #bababa;background:#ececec"></div>
<div style="position:absolute;left:902px;top:132px;width:14px;height:8px;border:1px solid #c2c2c2;background:#ececec"></div>
<svg style="position:absolute;left:905px;top:127px" width="8" height="4"><path d="M1 3.6L4 0.2L7 3.6Z" fill="#000"/></svg>
<svg style="position:absolute;left:905px;top:134px" width="8" height="4"><path d="M1 0.4L4 3.8L7 0.4Z" fill="#000"/></svg>
<div class="t" style="left:871.00px;top:122.00px;font-size:11.5px;color:#000;transform:scaleX(0.94);">0</div>
<div style="position:absolute;left:924px;top:122px;width:71px;height:20px;background:#fff"></div>
<div class="t" style="left:926.00px;top:122.00px;font-size:11.5px;color:#000;transform:scaleX(0.9128);">0 mV</div>
<div class="t" style="left:827.00px;top:148.00px;font-size:11.5px;color:#000;transform:scaleX(0.8768);">Gain</div>
<div style="position:absolute;left:868px;top:149px;width:49px;height:19px;background:#fff;border:1px solid #f9f9f9;border-top:none;border-bottom:1px solid #8a8a8a"></div>
<div style="position:absolute;left:902px;top:150px;width:14px;height:8px;border:1px solid #bababa;background:#ececec"></div>
<div style="position:absolute;left:902px;top:158px;width:14px;height:8px;border:1px solid #c2c2c2;background:#ececec"></div>
<svg style="position:absolute;left:905px;top:153px" width="8" height="4"><path d="M1 3.6L4 0.2L7 3.6Z" fill="#000"/></svg>
<svg style="position:absolute;left:905px;top:160px" width="8" height="4"><path d="M1 0.4L4 3.8L7 0.4Z" fill="#000"/></svg>
<div class="t" style="left:871.00px;top:148.00px;font-size:11.5px;color:#000;transform:scaleX(0.94);">0 dB</div>
<div style="position:absolute;left:924px;top:148px;width:71px;height:20px;background:#fff"></div>
<div class="t" style="left:926.00px;top:148.00px;font-size:11.5px;color:#000;transform:scaleX(0.9300);">100 mV/div</div>
<div class="cbk" style="left:827px;top:191px"></div>
<svg style="position:absolute;left:827px;top:191px" width="13" height="13"><path d="M3.2 6.6L5.4 8.8L9.8 4.4" stroke="#fff" stroke-width="1" fill="none"/></svg>
<div class="t" style="left:845.00px;top:188.00px;font-size:11.5px;color:#000;transform:scaleX(0.9208);">Displayed</div>
<div class="cb" style="left:827px;top:211px"></div>
<div class="t" style="left:845.00px;top:208.00px;font-size:11.5px;color:#000;transform:scaleX(0.9335);">AC coupled</div>
<div class="cb" style="left:827px;top:231px"></div>
<div class="t" style="left:845.00px;top:228.00px;font-size:11.5px;color:#000;transform:scaleX(0.8845);">1 MOhm</div>
<div class="cb" style="left:827px;top:251px"></div>
<div class="t" style="left:845.00px;top:248.00px;font-size:11.5px;color:#000;transform:scaleX(0.9580);">10x probe</div>
<div class="cb" style="left:827px;top:271px"></div>
<div class="t" style="left:845.00px;top:268.00px;font-size:11.5px;color:#000;transform:scaleX(0.9157);">800 MHz antialias</div>
<div class="cb" style="left:827px;top:301px"></div>
<div class="t" style="left:845.00px;top:298.00px;font-size:11.5px;color:#000;transform:scaleX(0.9627);">Two channels</div>
<div class="cb" style="left:827px;top:321px;border-color:#cfcfcf;background:#f3f3f3"></div>
<div class="t" style="left:845.00px;top:318.00px;font-size:11.5px;color:#8c8c8c;transform:scaleX(0.9275);">Oversampling</div>
<div class="cb" style="left:827px;top:341px;border-color:#cfcfcf;background:#f3f3f3"></div>
<div class="t" style="left:845.00px;top:338.00px;font-size:11.5px;color:#8c8c8c;transform:scaleX(0.9244);">Interleaved</div>
<div class="cb" style="left:827px;top:371px"></div>
<div class="t" style="left:845.00px;top:368.00px;font-size:11.5px;color:#000;transform:scaleX(0.9409);">Show FFT</div>
<div class="combo" style="left:827px;top:399px;width:91px;height:22px"></div>
<div class="t" style="left:830.50px;top:400.50px;font-size:11.5px;color:#000;">Off</div>
<svg style="position:absolute;left:905.0px;top:407.5px" width="9" height="5"><path d="M0.5 0.5L4.5 4.5L8.5 0.5" stroke="#444" stroke-width="1" fill="none"/></svg>
<div class="t" style="left:936.90px;top:401.00px;font-size:11.5px;color:#000;">Low pass</div>
<div class="combo" style="left:827px;top:429px;width:111px;height:22px"></div>
<div class="t" style="left:830.50px;top:430.50px;font-size:11.5px;color:#000;">Gnd</div>
<svg style="position:absolute;left:925.0px;top:437.5px" width="9" height="5"><path d="M0.5 0.5L4.5 4.5L8.5 0.5" stroke="#444" stroke-width="1" fill="none"/></svg>
<div class="t" style="left:947.00px;top:431.00px;font-size:11.5px;color:#000;transform:scaleX(0.9744);">Aux out</div>
<div class="gb" style="left:1007px;top:59px;width:211px;height:410px;border-right:none;"></div>
<div class="btnb" style="left:1028px;top:70px;width:69px;height:21px"></div>
<div class="t" style="left:1053.40px;top:70.50px;font-size:11.5px;color:#000;transform:scaleX(0.8580);">Run</div>
<div class="btn" style="left:1028px;top:100px;width:69px;height:21px"></div>
<div class="t" style="left:1048.00px;top:100.50px;font-size:11.5px;color:#000;transform:scaleX(0.8978);">Single</div>
<div class="btnb" style="left:1028px;top:130px;width:69px;height:21px"></div>
<div class="t" style="left:1050.00px;top:130.50px;font-size:11.5px;color:#000;transform:scaleX(0.9384);">Auto</div>
<div class="t" style="left:1144.00px;top:69.00px;font-size:11.5px;color:#000;transform:scaleX(0.9402);">Trig threshold</div>
<div style="position:absolute;left:1179px;top:99px;width:5px;height:251px;background:#e6e6e6;border:1px solid #d0d0d0;border-radius:2px"></div>
<div style="position:absolute;left:1177px;top:219px;width:9px;height:10px;background:#0067c0"></div>
<div class="gb" style="left:1017px;top:176px;width:121px;height:183px;"></div>
<div style="position:absolute;left:1022.8px;top:174px;width:77.70000000000005px;height:4px;background:#f0f0f0"></div>
<div class="t" style="left:1025.80px;top:166.00px;font-size:11.5px;color:#000;transform:scaleX(0.9400);">Trigger options</div>
<div class="combo" style="left:1027px;top:193px;width:81px;height:21px"></div>
<div class="t" style="left:1030.50px;top:194.00px;font-size:11.5px;color:#000;">Rising</div>
<svg style="position:absolute;left:1095.0px;top:201.0px" width="9" height="5"><path d="M0.5 0.5L4.5 4.5L8.5 0.5" stroke="#444" stroke-width="1" fill="none"/></svg>
<div class="combo" style="left:1027px;top:219px;width:81px;height:21px"></div>
<div class="t" style="left:1030.50px;top:220.00px;font-size:11.5px;color:#000;">Chan 0</div>
<svg style="position:absolute;left:1095.0px;top:227.0px" width="9" height="5"><path d="M0.5 0.5L4.5 4.5L8.5 0.5" stroke="#444" stroke-width="1" fill="none"/></svg>
<div class="cb" style="left:1027px;top:255px"></div>
<div class="t" style="left:1044.90px;top:251.80px;font-size:11.5px;color:#000;transform:scaleX(0.9491);">Other boards</div>
<div class="cb" style="left:1027px;top:275px"></div>
<div class="t" style="left:1044.90px;top:271.60px;font-size:11.5px;color:#000;transform:scaleX(0.9316);">External</div>
<div style="position:absolute;left:1028px;top:305px;width:49px;height:21px;background:#fff;border:1px solid #f9f9f9;border-top:none;border-bottom:1px solid #8a8a8a"></div>
<div style="position:absolute;left:1062px;top:306px;width:14px;height:9px;border:1px solid #bababa;background:#ececec"></div>
<div style="position:absolute;left:1062px;top:315px;width:14px;height:9px;border:1px solid #c2c2c2;background:#ececec"></div>
<svg style="position:absolute;left:1065px;top:309px" width="8" height="4"><path d="M1 3.6L4 0.2L7 3.6Z" fill="#000"/></svg>
<svg style="position:absolute;left:1065px;top:318px" width="8" height="4"><path d="M1 0.4L4 3.8L7 0.4Z" fill="#000"/></svg>
<div class="t" style="left:1031.00px;top:305.00px;font-size:11.5px;color:#000;transform:scaleX(0.94);">0</div>
<div class="t" style="left:1087.00px;top:302.40px;font-size:11.5px;color:#000;transform:scaleX(0.8764);">ToT</div>
<div style="position:absolute;left:1028px;top:329px;width:49px;height:20px;background:#fff;border:1px solid #f9f9f9;border-top:none;border-bottom:1px solid #8a8a8a"></div>
<div style="position:absolute;left:1062px;top:330px;width:14px;height:9px;border:1px solid #bababa;background:#ececec"></div>
<div style="position:absolute;left:1062px;top:339px;width:14px;height:8px;border:1px solid #c2c2c2;background:#ececec"></div>
<svg style="position:absolute;left:1065px;top:333px" width="8" height="4"><path d="M1 3.6L4 0.2L7 3.6Z" fill="#000"/></svg>
<svg style="position:absolute;left:1065px;top:341px" width="8" height="4"><path d="M1 0.4L4 3.8L7 0.4Z" fill="#000"/></svg>
<div class="t" style="left:1031.00px;top:328.50px;font-size:11.5px;color:#000;transform:scaleX(0.94);">2</div>
<div class="t" style="left:1087.00px;top:327.20px;font-size:11.5px;color:#000;transform:scaleX(0.8865);">Delta</div>
<div class="t" style="left:1092.00px;top:366.80px;font-size:11.5px;color:#000;transform:scaleX(0.9007);">Trig time</div>
<div style="position:absolute;left:1017px;top:391px;width:191px;height:5px;background:#e6e6e6;border:1px solid #d0d0d0;border-radius:2px"></div>
<div style="position:absolute;left:1108px;top:389px;width:10px;height:9px;background:#0067c0"></div>
<div class="t" style="left:1047.00px;top:416.80px;font-size:11.5px;color:#000;transform:scaleX(0.9172);">Time scale</div>
<div style="position:absolute;left:1028px;top:440px;width:89px;height:19px;background:#fff;border-bottom:1px solid #8a8a8a"></div>
<div class="t" style="left:1054.00px;top:439.30px;font-size:11.5px;color:#000;transform:scaleX(0.9490);">15.6 ns</div>
<div class="btn" style="left:1138px;top:420px;width:59px;height:19px"></div>
<div class="t" style="left:1152.40px;top:419.50px;font-size:11.5px;color:#000;transform:scaleX(0.9389);">Faster</div>
<div class="btn" style="left:1138px;top:441px;width:59px;height:18px"></div>
<div class="t" style="left:1150.00px;top:440.00px;font-size:11.5px;color:#000;transform:scaleX(0.9843);">Slower</div>
<div class="gb" style="left:817px;top:486px;width:121px;height:163px;"></div>
<div style="position:absolute;left:823.4px;top:484px;width:96.20000000000005px;height:4px;background:#f0f0f0"></div>
<div class="t" style="left:826.40px;top:476.00px;font-size:11.5px;color:#000;transform:scaleX(0.9471);">Clocks (advanced)</div>
<div class="t" style="left:827.00px;top:509.50px;font-size:11.5px;color:#000;transform:scaleX(0.8750);">PLL:</div>
<div style="position:absolute;left:857px;top:510px;width:50px;height:20px;background:#efefef;border:1px solid #e4e4e4;border-radius:2px"></div>
<div style="position:absolute;left:892px;top:512px;width:13px;height:16px;border:1px solid #dedede;background:#ececec"></div>
<div style="position:absolute;left:892px;top:520px;width:13px;height:1px;background:#dedede"></div>
<svg style="position:absolute;left:895px;top:514px" width="8" height="4"><path d="M1 3.6L4 0.2L7 3.6Z" fill="#a0a0a0"/></svg>
<svg style="position:absolute;left:895px;top:522px" width="8" height="4"><path d="M1 0.4L4 3.8L7 0.4Z" fill="#a0a0a0"/></svg>
<div class="t" style="left:860.00px;top:509.50px;font-size:11.5px;color:#a0a0a0;transform:scaleX(0.94);">0</div>
<div class="t" style="left:827.00px;top:536.90px;font-size:11.5px;color:#000;transform:scaleX(0.9468);">c0</div>
<div style="position:absolute;left:828px;top:560px;width:18px;height:18px;background:#f6f6f6;border:1px solid #e6e6e6;border-radius:3px"></div>
<svg style="position:absolute;left:831.5px;top:565px" width="11" height="6"><path d="M0 6L5.5 0L11 6Z" fill="#a0a0a0"/></svg>
<div style="position:absolute;left:828px;top:581px;width:18px;height:17px;background:#f6f6f6;border:1px solid #e6e6e6;border-radius:3px"></div>
<svg style="position:absolute;left:831.5px;top:586px" width="11" height="6"><path d="M0 0L5.5 6L11 0Z" fill="#a0a0a0"/></svg>
<div class="t" style="left:847.20px;top:536.90px;font-size:11.5px;color:#000;transform:scaleX(0.9221);">c1</div>
<div style="position:absolute;left:848px;top:560px;width:18px;height:18px;background:#f6f6f6;border:1px solid #e6e6e6;border-radius:3px"></div>
<svg style="position:absolute;left:851.5px;top:565px" width="11" height="6"><path d="M0 6L5.5 0L11 6Z" fill="#a0a0a0"/></svg>
<div style="position:absolute;left:848px;top:581px;width:18px;height:17px;background:#f6f6f6;border:1px solid #e6e6e6;border-radius:3px"></div>
<svg style="position:absolute;left:851.5px;top:586px" width="11" height="6"><path d="M0 0L5.5 6L11 0Z" fill="#a0a0a0"/></svg>
<div class="t" style="left:867.00px;top:536.90px;font-size:11.5px;color:#000;transform:scaleX(0.9468);">c2</div>
<div style="position:absolute;left:868px;top:560px;width:18px;height:18px;background:#f6f6f6;border:1px solid #e6e6e6;border-radius:3px"></div>
<svg style="position:absolute;left:871.5px;top:565px" width="11" height="6"><path d="M0 6L5.5 0L11 6Z" fill="#a0a0a0"/></svg>
<div style="position:absolute;left:868px;top:581px;width:18px;height:17px;background:#f6f6f6;border:1px solid #e6e6e6;border-radius:3px"></div>
<svg style="position:absolute;left:871.5px;top:586px" width="11" height="6"><path d="M0 0L5.5 6L11 0Z" fill="#a0a0a0"/></svg>
<div class="t" style="left:887.00px;top:536.90px;font-size:11.5px;color:#000;transform:scaleX(0.9468);">c3</div>
<div style="position:absolute;left:888px;top:560px;width:18px;height:18px;background:#f6f6f6;border:1px solid #e6e6e6;border-radius:3px"></div>
<svg style="position:absolute;left:891.5px;top:565px" width="11" height="6"><path d="M0 6L5.5 0L11 6Z" fill="#a0a0a0"/></svg>
<div style="position:absolute;left:888px;top:581px;width:18px;height:17px;background:#f6f6f6;border:1px solid #e6e6e6;border-radius:3px"></div>
<svg style="position:absolute;left:891.5px;top:586px" width="11" height="6"><path d="M0 0L5.5 6L11 0Z" fill="#a0a0a0"/></svg>
<div class="t" style="left:907.00px;top:536.90px;font-size:11.5px;color:#000;transform:scaleX(0.9798);">c4</div>
<div style="position:absolute;left:908px;top:560px;width:18px;height:18px;background:#f6f6f6;border:1px solid #e6e6e6;border-radius:3px"></div>
<svg style="position:absolute;left:911.5px;top:565px" width="11" height="6"><path d="M0 6L5.5 0L11 6Z" fill="#a0a0a0"/></svg>
<div style="position:absolute;left:908px;top:581px;width:18px;height:17px;background:#f6f6f6;border:1px solid #e6e6e6;border-radius:3px"></div>
<svg style="position:absolute;left:911.5px;top:586px" width="11" height="6"><path d="M0 0L5.5 6L11 0Z" fill="#a0a0a0"/></svg>
<div class="btn" style="left:838px;top:610px;width:79px;height:21px"></div>
<div class="t" style="left:853.40px;top:610.50px;font-size:11.5px;color:#000;transform:scaleX(0.8920);">Reset PLL</div>
<div class="gb" style="left:947px;top:486px;width:131px;height:163px;"></div>
<div style="position:absolute;left:953.3px;top:484px;width:83.29999999999995px;height:4px;background:#f0f0f0"></div>
<div class="t" style="left:956.30px;top:476.00px;font-size:11.5px;color:#000;transform:scaleX(0.9229);">Readout options</div>
<div style="position:absolute;left:958px;top:500px;width:49px;height:21px;background:#fff;border:1px solid #f9f9f9;border-top:none;border-bottom:1px solid #8a8a8a"></div>
<div style="position:absolute;left:992px;top:501px;width:14px;height:9px;border:1px solid #bababa;background:#ececec"></div>
<div style="position:absolute;left:992px;top:510px;width:14px;height:9px;border:1px solid #c2c2c2;background:#ececec"></div>
<svg style="position:absolute;left:995px;top:504px" width="8" height="4"><path d="M1 3.6L4 0.2L7 3.6Z" fill="#000"/></svg>
<svg style="position:absolute;left:995px;top:513px" width="8" height="4"><path d="M1 0.4L4 3.8L7 0.4Z" fill="#000"/></svg>
<div class="t" style="left:961.00px;top:500.00px;font-size:11.5px;color:#000;transform:scaleX(0.94);">100</div>
<div class="t" style="left:1017.00px;top:499.30px;font-size:11.5px;color:#000;transform:scaleX(0.8929);">Depth</div>
<div style="position:absolute;left:958px;top:528px;width:49px;height:21px;background:#fff;border:1px solid #f9f9f9;border-top:none;border-bottom:1px solid #8a8a8a"></div>
<div style="position:absolute;left:992px;top:529px;width:14px;height:9px;border:1px solid #bababa;background:#ececec"></div>
<div style="position:absolute;left:992px;top:538px;width:14px;height:9px;border:1px solid #c2c2c2;background:#ececec"></div>
<svg style="position:absolute;left:995px;top:532px" width="8" height="4"><path d="M1 3.6L4 0.2L7 3.6Z" fill="#000"/></svg>
<svg style="position:absolute;left:995px;top:541px" width="8" height="4"><path d="M1 0.4L4 3.8L7 0.4Z" fill="#000"/></svg>
<div class="t" style="left:961.00px;top:528.00px;font-size:11.5px;color:#000;transform:scaleX(0.94);">4</div>
<div class="t" style="left:1017.00px;top:529.00px;font-size:11.5px;color:#000;transform:scaleX(0.9040);">Upsample</div>
<div style="position:absolute;left:958px;top:594px;width:49px;height:21px;background:#fff;border:1px solid #f9f9f9;border-top:none;border-bottom:1px solid #8a8a8a"></div>
<div style="position:absolute;left:992px;top:595px;width:14px;height:9px;border:1px solid #bababa;background:#ececec"></div>
<div style="position:absolute;left:992px;top:604px;width:14px;height:9px;border:1px solid #c2c2c2;background:#ececec"></div>
<svg style="position:absolute;left:995px;top:598px" width="8" height="4"><path d="M1 3.6L4 0.2L7 3.6Z" fill="#000"/></svg>
<svg style="position:absolute;left:995px;top:607px" width="8" height="4"><path d="M1 0.4L4 3.8L7 0.4Z" fill="#000"/></svg>
<div class="t" style="left:961.00px;top:594.00px;font-size:11.5px;color:#000;transform:scaleX(0.94);">100</div>
<div class="t" style="left:1017.00px;top:593.00px;font-size:11.5px;color:#000;transform:scaleX(0.9013);">Delay</div>
<div style="position:absolute;left:958px;top:618px;width:49px;height:21px;background:#fff;border:1px solid #f9f9f9;border-top:none;border-bottom:1px solid #8a8a8a"></div>
<div style="position:absolute;left:992px;top:619px;width:14px;height:9px;border:1px solid #bababa;background:#ececec"></div>
<div style="position:absolute;left:992px;top:628px;width:14px;height:9px;border:1px solid #c2c2c2;background:#ececec"></div>
<svg style="position:absolute;left:995px;top:622px" width="8" height="4"><path d="M1 3.6L4 0.2L7 3.6Z" fill="#000"/></svg>
<svg style="position:absolute;left:995px;top:631px" width="8" height="4"><path d="M1 0.4L4 3.8L7 0.4Z" fill="#000"/></svg>
<div class="t" style="left:961.00px;top:618.00px;font-size:11.5px;color:#000;transform:scaleX(0.94);">0</div>
<div class="t" style="left:1017.00px;top:617.50px;font-size:11.5px;color:#000;transform:scaleX(0.9160);">Fine delay</div>
<div class="gb" style="left:1087px;top:486px;width:131px;height:163px;border-right:none;"></div>
<div style="position:absolute;left:1093.2px;top:484px;width:69.39999999999986px;height:4px;background:#f0f0f0"></div>
<div class="t" style="left:1096.20px;top:476.00px;font-size:11.5px;color:#000;transform:scaleX(0.9754);">View options</div>
<div style="position:absolute;left:1098px;top:500px;width:49px;height:20px;background:#fff;border:1px solid #f9f9f9;border-top:none;border-bottom:1px solid #8a8a8a"></div>
<div style="position:absolute;left:1132px;top:501px;width:14px;height:9px;border:1px solid #bababa;background:#ececec"></div>
<div style="position:absolute;left:1132px;top:510px;width:14px;height:8px;border:1px solid #c2c2c2;background:#ececec"></div>
<svg style="position:absolute;left:1135px;top:504px" width="8" height="4"><path d="M1 3.6L4 0.2L7 3.6Z" fill="#000"/></svg>
<svg style="position:absolute;left:1135px;top:512px" width="8" height="4"><path d="M1 0.4L4 3.8L7 0.4Z" fill="#000"/></svg>
<div class="t" style="left:1101.00px;top:499.50px;font-size:11.5px;color:#000;transform:scaleX(0.94);">0</div>
<div class="t" style="left:1157.00px;top:501.00px;font-size:11.5px;color:#000;transform:scaleX(0.9389);">Persist</div>
<div class="cbk" style="left:1097px;top:531px"></div>
<svg style="position:absolute;left:1097px;top:531px" width="13" height="13"><path d="M3.2 6.6L5.4 8.8L9.8 4.4" stroke="#fff" stroke-width="1" fill="none"/></svg>
<div class="t" style="left:1115.00px;top:527.60px;font-size:11.5px;color:#000;transform:scaleX(0.9275);">Persist lines</div>
<div class="cb" style="left:1097px;top:551px"></div>
<div class="t" style="left:1115.00px;top:548.10px;font-size:11.5px;color:#000;transform:scaleX(0.9512);">Persist average</div>
<div style="position:absolute;left:1098px;top:590px;width:49px;height:21px;background:#fff;border:1px solid #f9f9f9;border-top:none;border-bottom:1px solid #8a8a8a"></div>
<div style="position:absolute;left:1132px;top:591px;width:14px;height:9px;border:1px solid #bababa;background:#ececec"></div>
<div style="position:absolute;left:1132px;top:600px;width:14px;height:9px;border:1px solid #c2c2c2;background:#ececec"></div>
<svg style="position:absolute;left:1135px;top:594px" width="8" height="4"><path d="M1 3.6L4 0.2L7 3.6Z" fill="#000"/></svg>
<svg style="position:absolute;left:1135px;top:603px" width="8" height="4"><path d="M1 0.4L4 3.8L7 0.4Z" fill="#000"/></svg>
<div class="t" style="left:1101.00px;top:590.00px;font-size:11.5px;color:#000;transform:scaleX(0.94);">20%</div>
<div class="t" style="left:1157.00px;top:589.10px;font-size:11.5px;color:#000;transform:scaleX(0.9370);">Fit fraction</div>
<div style="position:absolute;left:1098px;top:618px;width:49px;height:21px;background:#fff;border:1px solid #f9f9f9;border-top:none;border-bottom:1px solid #8a8a8a"></div>
<div style="position:absolute;left:1132px;top:619px;width:14px;height:9px;border:1px solid #bababa;background:#ececec"></div>
<div style="position:absolute;left:1132px;top:628px;width:14px;height:9px;border:1px solid #c2c2c2;background:#ececec"></div>
<svg style="position:absolute;left:1135px;top:622px" width="8" height="4"><path d="M1 3.6L4 0.2L7 3.6Z" fill="#000"/></svg>
<svg style="position:absolute;left:1135px;top:631px" width="8" height="4"><path d="M1 0.4L4 3.8L7 0.4Z" fill="#000"/></svg>
<div class="t" style="left:1101.00px;top:618.00px;font-size:11.5px;color:#000;transform:scaleX(0.94);">1</div>
<div class="t" style="left:1157.00px;top:618.80px;font-size:11.5px;color:#000;transform:scaleX(0.9520);">Line width</div>
<div style="position:absolute;left:817px;top:659px;width:400px;height:240px;background:#fff;border:1px solid #52f0d0"></div>
<div style="position:absolute;left:818px;top:800px;width:14px;height:98px;background:#f0f0f0"></div>
<div style="position:absolute;left:832px;top:710px;width:375px;height:1px;background:#d8d8d8"></div>
<div style="position:absolute;left:832px;top:711px;width:375px;height:29px;background:#f5f5f5"></div>
<div style="position:absolute;left:832px;top:739px;width:375px;height:1px;background:#d8d8d8"></div>
<div style="position:absolute;left:832px;top:769px;width:375px;height:1px;background:#d8d8d8"></div>
<div style="position:absolute;left:832px;top:770px;width:375px;height:30px;background:#f5f5f5"></div>
<div style="position:absolute;left:832px;top:799px;width:375px;height:1px;background:#d8d8d8"></div>
<div style="position:absolute;left:967px;top:660px;width:1px;height:140px;background:#d8d8d8"></div>
<div style="position:absolute;left:1047px;top:660px;width:1px;height:140px;background:#d8d8d8"></div>
<div style="position:absolute;left:1127px;top:660px;width:1px;height:140px;background:#d8d8d8"></div>
<div style="position:absolute;left:1207px;top:660px;width:1px;height:140px;background:#d8d8d8"></div>
<div style="position:absolute;left:832px;top:660px;width:1px;height:140px;background:#d8d8d8"></div>
<div class="t" style="left:855.20px;top:661.00px;font-size:11.5px;color:#000;transform:scaleX(0.9176);">Board 1 Channel 0</div>
<div class="t" style="left:994.60px;top:661.00px;font-size:11.5px;color:#000;transform:scaleX(0.8894);">Value</div>
<div class="t" style="left:1066.60px;top:661.00px;font-size:11.5px;color:#000;transform:scaleX(0.9572);">Average</div>
<div class="t" style="left:1156.00px;top:661.00px;font-size:11.5px;color:#000;transform:scaleX(0.8257);">RMS</div>
<div class="t" style="left:822.60px;top:686.60px;font-size:11.5px;color:#000;">1</div>
<div class="t" style="left:835.50px;top:686.60px;font-size:11.5px;color:#000;transform:scaleX(0.9206);">ADC temp (°C)</div>
<div class="t" style="left:970.80px;top:686.60px;font-size:11.5px;color:#000;">43.19</div>
<div class="t" style="left:1050.60px;top:686.60px;font-size:11.5px;color:#000;">43.19</div>
<div class="t" style="left:1130.50px;top:686.60px;font-size:11.5px;color:#000;">0.0</div>
<div class="t" style="left:822.60px;top:716.50px;font-size:11.5px;color:#000;">2</div>
<div class="t" style="left:835.50px;top:716.50px;font-size:11.5px;color:#000;transform:scaleX(0.9314);">Board temp (°C)</div>
<div class="t" style="left:970.80px;top:716.50px;font-size:11.5px;color:#000;">34.47</div>
<div class="t" style="left:1050.60px;top:716.50px;font-size:11.5px;color:#000;">34.45</div>
<div class="t" style="left:1130.50px;top:716.50px;font-size:11.5px;color:#000;">0.01</div>
<div class="t" style="left:822.60px;top:746.00px;font-size:11.5px;color:#000;">3</div>
<div class="t" style="left:835.50px;top:746.00px;font-size:11.5px;color:#000;transform:scaleX(0.8897);">Mean (mV)</div>
<div class="t" style="left:970.80px;top:746.00px;font-size:11.5px;color:#000;">-22.68</div>
<div class="t" style="left:1050.60px;top:746.00px;font-size:11.5px;color:#000;">-22.78</div>
<div class="t" style="left:1130.50px;top:746.00px;font-size:11.5px;color:#000;">0.26</div>
<div class="t" style="left:822.60px;top:776.00px;font-size:11.5px;color:#000;">4</div>
<div class="t" style="left:835.50px;top:776.00px;font-size:11.5px;color:#000;transform:scaleX(0.8554);">RMS (mV)</div>
<div class="t" style="left:970.80px;top:776.00px;font-size:11.5px;color:#000;">341.17</div>
<div class="t" style="left:1050.60px;top:776.00px;font-size:11.5px;color:#000;">341.17</div>
<div class="t" style="left:1130.50px;top:776.00px;font-size:11.5px;color:#000;">0.12</div>
<div class="t" style="left:7.30px;top:907.50px;font-size:11.5px;color:#000;transform:scaleX(0.9523);">3.200 GS/s, 31.20 fps, 6173 events, 33.66 Hz, 0.71 MB/s</div>
</body></html>
